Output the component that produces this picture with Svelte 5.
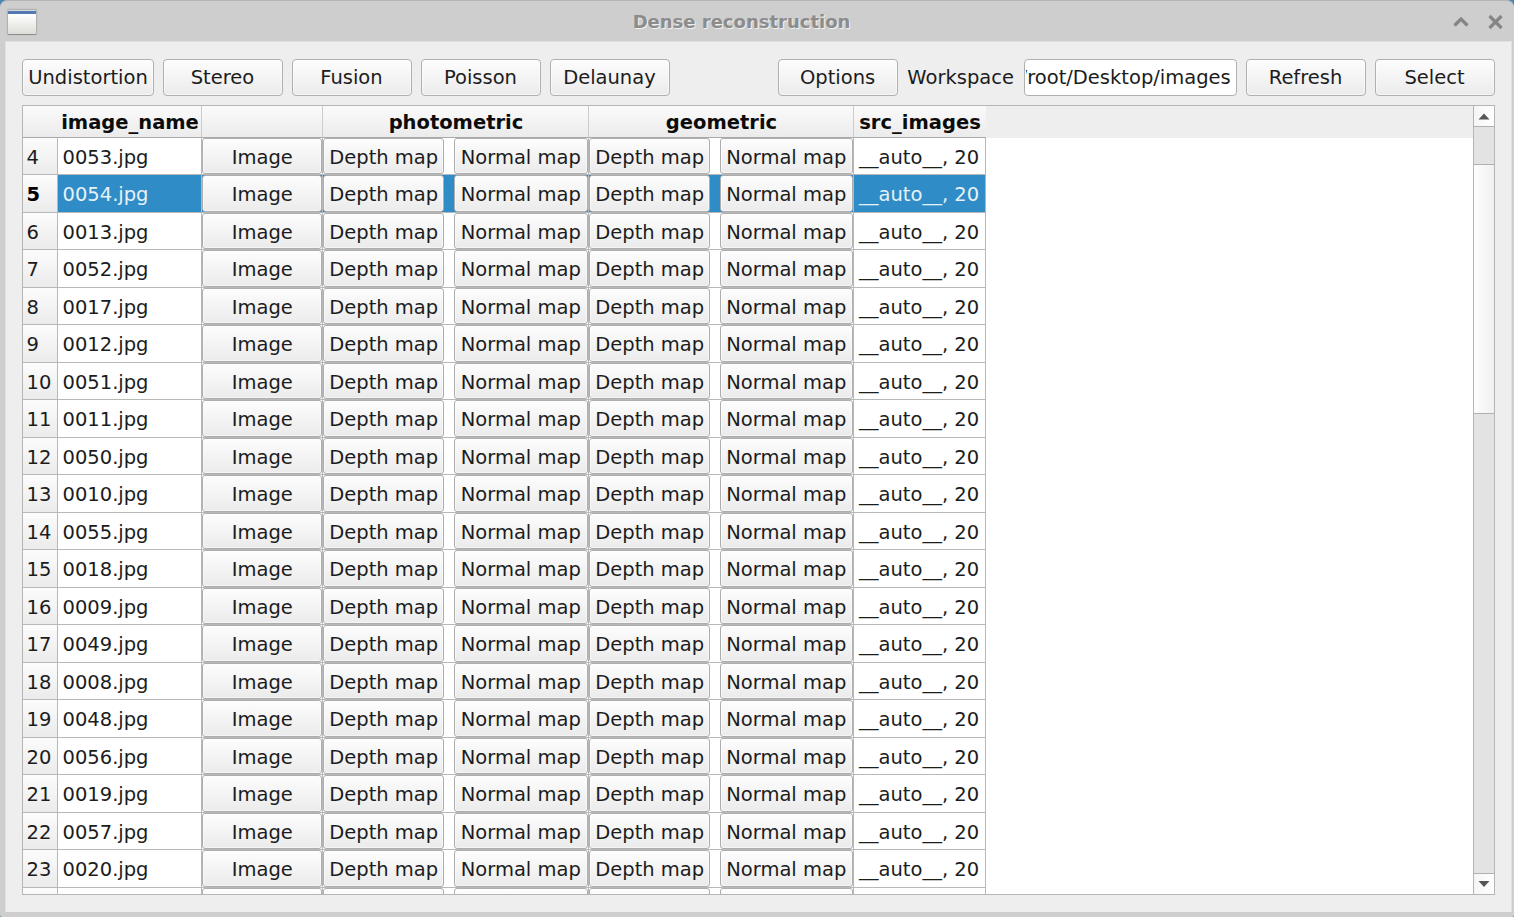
<script>
  const names = ['0053', '0054', '0013', '0052', '0017', '0012', '0051', '0011', '0050', '0010',
    '0055', '0018', '0009', '0049', '0008', '0048', '0056', '0019', '0057', '0020'];
  const rows = names.map((n, i) => ({ number: i + 4, name: n + '.jpg' }));
  const selected = 5;
  const actions = ['Undistortion', 'Stereo', 'Fusion', 'Poisson', 'Delaunay'];
</script>

<div class="window">
  <header class="titlebar">
    <span class="appicon"></span>
    <h1>Dense reconstruction</h1>
    <svg class="controls" width="54" height="18" viewBox="0 0 54 18">
      <path d="M2.500 12.500 L9 6 L15.500 12.500" fill="none" stroke="#858585" stroke-width="3.200" />
      <path d="M37.500 3 L49.500 15 M49.500 3 L37.500 15" fill="none" stroke="#858585" stroke-width="3.200" />
    </svg>
  </header>

  <main>
    <div class="toolbar">
      {#each actions as label, i}
        <button class="btn tool" class:wide={i === 0}>{label}</button>
      {/each}
      <span class="spacer"></span>
      <button class="btn tool">Options</button>
      <span class="label">Workspace</span>
      <div class="field"><div class="value"><span>/root/Desktop/images</span></div></div>
      <button class="btn tool">Refresh</button>
      <button class="btn tool">Select</button>
    </div>

    <div class="table">
      <div class="view">
        <div class="head">
          <div class="row heading">
            <div></div>
            <div class="hname">image_name</div>
            <div></div>
            <div class="group">photometric</div>
            <div class="group">geometric</div>
            <div class="last">src_images</div>
          </div>
        </div>
        {#each rows as row, i}
          <div class="row" class:tall={i % 2 === 1} class:selected={row.number === selected}>
            <div class="num">{row.number}</div>
            <div class="text">{row.name}</div>
            <div class="cell"><button class="btn">Image</button></div>
            <div class="cell pair"><button class="btn">Depth map</button><button class="btn normal">Normal map</button></div>
            <div class="cell pair"><button class="btn">Depth map</button><button class="btn normal">Normal map</button></div>
            <div class="text src">__auto__, 20</div>
          </div>
        {/each}
        <div class="row">
          <div class="num"></div>
          <div class="text"></div>
          <div class="cell"><button class="btn"></button></div>
          <div class="cell pair"><button class="btn"></button><button class="btn"></button></div>
          <div class="cell pair"><button class="btn"></button><button class="btn"></button></div>
          <div class="text src"></div>
        </div>
      </div>
      <div class="scroll">
        <span class="arrow"><svg width="12" height="7"><path d="M0.500 6.500 L6 0.500 L11.500 6.500Z" fill="#555" /></svg></span>
        <span class="thumb"></span>
        <span class="arrow down"><svg width="12" height="7"><path d="M0.500 0 L6 6 L11.500 0Z" fill="#555" /></svg></span>
      </div>
    </div>
  </main>
</div>

<style>
  :global(body) { background: #4a86ad; overflow: hidden; }
  .window {
    width: 1514px; height: 917px; box-sizing: border-box;
    display: flex; flex-direction: column;
    padding: 0 2px 5px 5px;
    background: #cecece; border-top: 1px solid #b5b5b5;
    border-radius: 7px 7px 2px 2px;
    font: 19.5px "DejaVu Sans", sans-serif; color: #1c1c1c;
  }
  .titlebar { height: 40px; flex: none; display: flex; align-items: center; }
  .appicon {
    width: 30px; height: 26px; margin: 1px 0 0 2px; box-sizing: border-box;
    border: 1px solid #b3b4b1; border-bottom-color: #8e8f8c; border-radius: 2px;
    background: linear-gradient(#d5dae2 0 1px, #5379b0 1px 4px, #fff 4px, #f7f7f5 9px, #dcddd8);
    box-shadow: 0 0 1px #999;
  }
  h1 {
    flex: 1; margin: 2px 0 0 -6px; text-align: center;
    font-size: 18px; line-height: 22px; font-weight: bold; color: #8c8c8c; text-shadow: 1px 1px 0 #f0f0f0;
  }
  .controls { flex: none; margin: 1px 6px 0 0; }
  main {
    flex: 1; min-height: 0; box-sizing: border-box; background: #eee;
    border: 1px solid #e0e0e0; border-bottom: 0;
    padding: 17px 16px 17px 16px; display: flex; flex-direction: column;
  }
  .toolbar { display: flex; gap: 9.600px; height: 37px; margin: 0 0.300px; align-items: stretch; flex: none; }
  .btn {
    font: inherit; line-height: 24px; color: inherit; padding: 0; box-sizing: border-box; white-space: nowrap;
    border: 1px solid #b0b0b0; border-radius: 3px; overflow: hidden;
    background: linear-gradient(#fdfdfd, #ebebeb);
    box-shadow: inset 0 0 0 1px #ffffff80;
  }
  .tool { width: 119.400px; flex: none; border-radius: 4px; padding-right: 1px; }
  .wide { width: 131.400px; padding-right: 0; }
  .spacer { flex: 1; }
  .label { width: 107.400px; line-height: 37px; }
  .field {
    width: 212.400px; box-sizing: border-box; border: 1px solid #b0b0b0; border-radius: 4px;
    background: #fff; line-height: 35px; padding: 0 5px 0 1px;
  }
  .value { display: flex; justify-content: flex-end; overflow: hidden; white-space: nowrap; }
  .table {
    flex: 1; min-height: 0; margin-top: 9px; box-sizing: border-box;
    border: 1px solid #b5b5b5; background: #fff; display: flex;
  }
  .view { flex: 1; overflow: hidden; }
  .head { background: #eee; }
  .row {
    display: grid; grid-template-columns: 35px 144px 121px 266px 265px 132px;
    grid-template-rows: 100%;
    height: 37px; width: 963px; line-height: 39px;
  }
  .tall { height: 38px; }
  .row > div { box-sizing: border-box; border-right: 1px solid #b8b8b8; border-bottom: 1px solid #b8b8b8; min-width: 0; min-height: 0; white-space: nowrap; }
  .heading { height: 32px; font-weight: bold; color: #0c0c0c; line-height: 33px; }
  .row.heading > div {
    background: linear-gradient(#fbfbfb, #ebebeb); text-align: center;
    border-right-color: #ccc; border-bottom-color: #a9a9a9;
  }
  .row.heading > div:first-child, .row.heading > .last { border-right: 0; }
  .heading > .hname { padding-left: 1px; }
  .heading > .group { padding-left: 1px; }
  .num { background: linear-gradient(#fcfcfc, #ebebeb); padding-left: 3.500px; }
  .text { padding-left: 4.500px; background: #fff; }
  .src { padding-left: 5px; }
  .cell { display: grid; grid-template-rows: 100%; }
  .cell .btn { padding-top: 3px; padding-left: 0.500px; border-color: #adadad; }
  .tall .btn { padding-top: 2px; }
  .cell .normal { padding-right: 1px; }
  .pair { grid-template-columns: 121px 1fr; column-gap: 10px; }
  .selected .num { font-weight: bold; color: #000; }
  .selected .text, .selected .cell { background: #308cc6; color: #e6f1f8; }
  .selected .btn { color: #1c1c1c; }
  .scroll { width: 21px; flex: none; box-sizing: border-box; border-left: 1px solid #b5b5b5; background: #e3e3e3; display: flex; flex-direction: column; }
  .arrow { height: 21px; flex: none; box-sizing: border-box; display: grid; place-items: center; padding-right: 1px; background: linear-gradient(90deg, #f5f5f5, #fff); border-bottom: 1px solid #b0b0b0; }
  .thumb { height: 250px; margin-top: 37px; box-sizing: border-box; border: solid #b0b0b0; border-width: 1px 0; background: linear-gradient(90deg, #fefefe, #f0f0f0); }
  .down { margin-top: auto; border-bottom: 0; border-top: 1px solid #b0b0b0; }
</style>
